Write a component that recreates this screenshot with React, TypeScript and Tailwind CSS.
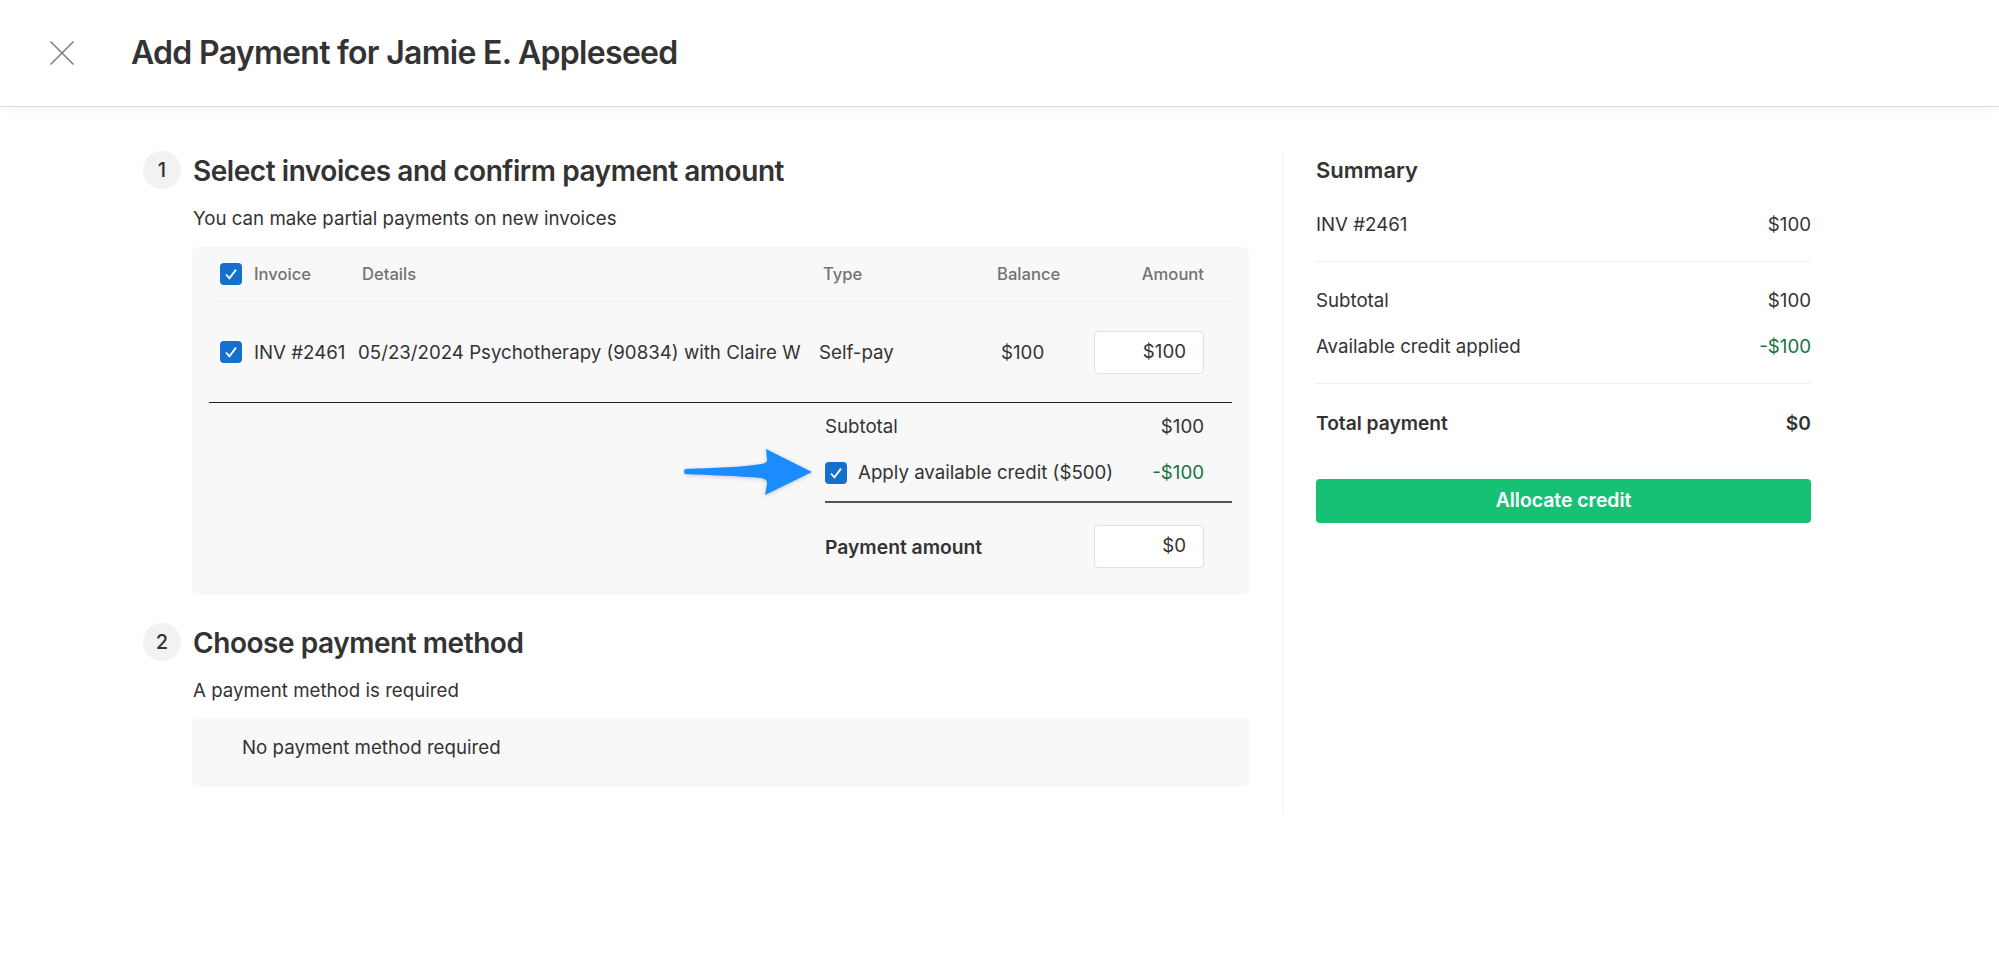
import React from "react";

const Check = () => (
  <span className="flex h-[22px] w-[22px] shrink-0 items-center justify-center rounded-[4px] bg-[#1570cd]">
    <svg width="16" height="16" viewBox="0 0 16 16" fill="none">
      <path d="M3 8.5 L6.4 12.3 L13 3.6" stroke="#fff" strokeWidth="1.8" />
    </svg>
  </span>
);

const StepTitle = ({ n, title }: { n: number; title: string }) => (
  <div className="flex h-[38px] items-center gap-3">
    <span className="flex h-[38px] w-[38px] items-center justify-center rounded-full bg-[#f2f2f2] text-[20px] font-medium">
      {n}
    </span>
    <h2 className="mt-[2px] text-[28px] leading-[38px] font-semibold tracking-[-0.45px]">{title}</h2>
  </div>
);

const AmountBox = ({ value }: { value: string }) => (
  <div className="flex h-[43px] w-[110px] items-center justify-end rounded-[4px] border border-[#dfdfdf] bg-white pr-[17px]">
    {value}
  </div>
);

export default function App() {
  return (
    <div className="min-h-[963px] bg-white text-[18.7px] text-[#333] [font-family:Inter,'Liberation_Sans',sans-serif]">
      <header className="flex h-[107px] items-center border-b border-[#d8dee8] pl-[49px] shadow-[0_3px_8px_rgba(30,50,90,0.04)]">
        <svg width="26" height="26" viewBox="0 0 26 26" fill="none" className="mr-[56px]">
          <path d="M1.5 1.5 L24.5 24.5 M24.5 1.5 L1.5 24.5" stroke="#7c7c7c" strokeWidth="1.5" />
        </svg>
        <h1 className="text-[32px] leading-10 font-semibold tracking-[-0.7px]">
          Add Payment for Jamie E. Appleseed
        </h1>
      </header>

      <main className="flex pt-[44px] pl-[143px]">
        <div className="w-[1106px]">
          <StepTitle n={1} title="Select invoices and confirm payment amount" />
          <p className="mt-[18px] ml-[50px] leading-6">You can make partial payments on new invoices</p>

          <section className="mt-[16px] ml-[49px] rounded-[6px] bg-[#f8f8f8] pr-[17px] pb-[27px] pl-[17px]">
            <div className="flex h-[55px] items-center border-b border-[#f3f3f3] pr-[28px] pl-[11px] text-[16.6px] font-medium text-[#737373]">
              <div className="flex w-[142px] items-center gap-3">
                <Check />
                Invoice
              </div>
              <div className="w-[461px]">Details</div>
              <div className="w-[174px]">Type</div>
              <div>Balance</div>
              <div className="ml-auto">Amount</div>
            </div>

            <div className="flex h-[101px] items-center border-b-[1.5px] border-[#222] pt-[1px] pr-[28px] pl-[11px]">
              <div className="flex w-[138px] items-center gap-3">
                <Check />
                <span className="mt-[2px]">INV #2461</span>
              </div>
              <div className="mt-[2px] w-[461px]">05/23/2024 Psychotherapy (90834) with Claire W</div>
              <div className="mt-[2px] w-[182px]">Self-pay</div>
              <div className="mt-[2px]">$100</div>
              <div className="ml-auto">
                <AmountBox value="$100" />
              </div>
            </div>

            <div className="ml-auto w-[407px]">
              <div className="flex h-[46px] items-center justify-between pt-[2px] pr-[28px]">
                <span>Subtotal</span>
                <span>$100</span>
              </div>
              <div className="relative flex h-[46px] items-center pt-[2px] pr-[28px]">
                <svg
                  width="130"
                  height="48"
                  viewBox="0 0 130 48"
                  className="absolute top-0 right-full mr-[12px] drop-shadow-[0_1px_2px_rgba(0,0,0,0.2)]"
                >
                  <path
                    d="M2 20 C30 19 60 18 78 15 Q85 14 84 10 L83 0 L129 23 L82 46 L84 35 Q85 30 78 29 C55 27 25 26 2 25 Q0 22.5 2 20 Z"
                    fill="#1a8cff"
                  />
                </svg>
                <Check />
                <span className="mt-[1px] ml-[11px]">Apply available credit ($500)</span>
                <span className="mt-[1px] ml-auto text-[#17733f]">-$100</span>
              </div>
              <div className="mt-[6px] border-t-2 border-[#555]" />
              <div className="mt-[22px] flex items-center justify-between pr-[28px]">
                <span className="mt-[2px] text-[19.3px] font-semibold">Payment amount</span>
                <AmountBox value="$0" />
              </div>
            </div>
          </section>

          <div className="mt-[28px]">
            <StepTitle n={2} title="Choose payment method" />
          </div>
          <p className="mt-[18px] ml-[50px] leading-6">A payment method is required</p>
          <section className="mt-[15px] ml-[49px] h-[69px] rounded-[6px] bg-[#f8f8f8] pt-[18px] pl-[50px] leading-6">
            No payment method required
          </section>
        </div>

        <aside className="ml-[33px] h-[664px] w-[529px] border-l border-[#f3f3f3] pt-[5px] pl-[33px]">
          <h3 className="text-[22px] leading-7 font-semibold">Summary</h3>
          <div className="mt-[29px] flex justify-between leading-6">
            <span>INV #2461</span>
            <span>$100</span>
          </div>
          <div className="mt-[24px] border-t border-[#efefef]" />
          <div className="mt-[27px] flex justify-between leading-6">
            <span>Subtotal</span>
            <span>$100</span>
          </div>
          <div className="mt-[22px] flex justify-between leading-6">
            <span>Available credit applied</span>
            <span className="text-[#17733f]">-$100</span>
          </div>
          <div className="mt-[24px] border-t border-[#efefef]" />
          <div className="mt-[27px] flex justify-between text-[19.2px] leading-6 font-semibold">
            <span>Total payment</span>
            <span>$0</span>
          </div>
          <button className="mt-[44px] flex h-[44px] w-full items-center justify-center rounded-[4px] bg-[#17c174] text-[19.4px] font-semibold text-white">
            Allocate credit
          </button>
        </aside>
      </main>
    </div>
  );
}
